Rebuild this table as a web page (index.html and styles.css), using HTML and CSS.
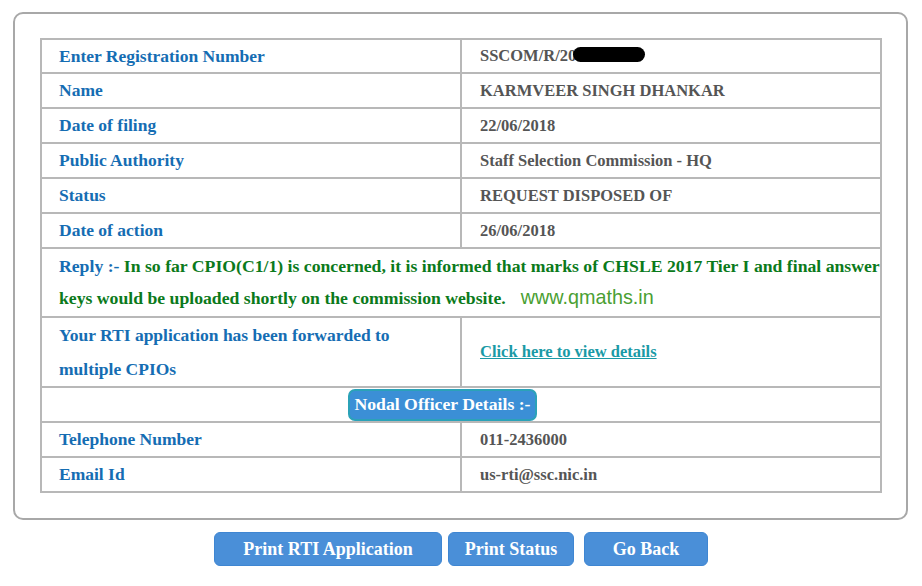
FILE: index.html
```html
<!DOCTYPE html>
<html>
<head>
<meta charset="utf-8">
<link rel="stylesheet" href="styles.css">
</head>
<body>
<div class="panel">
  <table class="status">
    <tr class="first"><td class="lbl">Enter Registration Number</td><td class="val">SSCOM/R/20<span class="redact"></span></td></tr>
    <tr><td class="lbl">Name</td><td class="val">KARMVEER SINGH DHANKAR</td></tr>
    <tr><td class="lbl">Date of filing</td><td class="val">22/06/2018</td></tr>
    <tr><td class="lbl">Public Authority</td><td class="val">Staff Selection Commission - HQ</td></tr>
    <tr><td class="lbl">Status</td><td class="val">REQUEST DISPOSED OF</td></tr>
    <tr><td class="lbl">Date of action</td><td class="val">26/06/2018</td></tr>
    <tr class="replyrow"><td class="reply" colspan="2"><span class="lbl-in">Reply :-</span> In so far CPIO(C1/1) is concerned, it is informed that marks of CHSLE 2017 Tier I and final answer keys would be uploaded shortly on the commission website.<span class="wm">www.qmaths.in</span></td></tr>
    <tr class="tall"><td class="lbl multi">Your RTI application has been forwarded to<br>multiple CPIOs</td><td class="val"><a class="link" href="#">Click here to view details</a></td></tr>
    <tr><td class="center" colspan="2"><span class="badge">Nodal Officer Details :-</span></td></tr>
    <tr><td class="lbl">Telephone Number</td><td class="val">011-2436000</td></tr>
    <tr><td class="lbl">Email Id</td><td class="val">us-rti@ssc.nic.in</td></tr>
  </table>
</div>
<div class="actions">
  <button class="btn b1">Print RTI Application</button>
  <button class="btn b2">Print Status</button>
  <button class="btn b3">Go Back</button>
</div>
</body>
</html>
```
FILE: styles.css
```css
html, body { margin: 0; padding: 0; background: #fff; }
body { font-family: "Liberation Serif", "Times New Roman", serif; font-weight: bold; }
.panel {
  margin: 12px 0 0 13px;
  width: 866px;
  border: 2px solid #a8a8a8;
  border-radius: 10px;
  padding: 24px 0 25px 25px;
}
.status {
  width: 842px;
  border-collapse: collapse;
  border: 2px solid #b0b0b0;
}
.status td {
  border: 2px solid #b8b8b8;
  height: 33px;
  padding: 0;
  vertical-align: middle;
}
.status .first td { height: 32px; }
.lbl {
  width: 401px;
  padding-left: 17px !important;
  color: #156db3;
  font-size: 17.5px;
}
.val {
  padding-left: 18px !important;
  color: #555;
  font-size: 16.5px;
}
.redact {
  display: inline-block;
  width: 72px;
  height: 15px;
  background: #000;
  border-radius: 8px;
  vertical-align: -1px;
  margin-left: -3px;
}
.replyrow td { height: 66px; }
.reply {
  padding: 0 0 1px 17px !important;
  color: #0b7a1b;
  font-size: 17.7px;
  line-height: 32px;
}
.lbl-in { color: #156db3; }
.wm {
  font-family: "Liberation Sans", Arial, sans-serif;
  font-weight: normal;
  color: #4aa032;
  font-size: 19.8px;
  line-height: 18px;
  margin-left: 15px;
}
.tall td { height: 67px; }
.multi { line-height: 34px; }
.link { color: #1a9aa6; text-decoration: underline; font-size: 16.5px; }
.center { text-align: center; padding-right: 37px !important; }
.badge {
  display: inline-block;
  background: #3b8fd6;
  color: #fff;
  border: 2px solid #2ba2b8;
  border-radius: 7px;
  padding: 3px 4px 4px;
  font-size: 17.7px;
  line-height: 21px;
}
.actions {
  display: flex;
  justify-content: center;
  gap: 6px;
  margin-top: 12px;
  padding-left: 0;
}
.btn {
  font-family: "Liberation Serif", "Times New Roman", serif;
  font-weight: bold;
  font-size: 18px;
  color: #fff;
  background: #4a8fd8;
  border: 1px solid #3f86d2;
  border-radius: 6px;
  height: 34px;
  padding: 0;
}
.b1 { width: 228px; }
.b2 { width: 126px; }
.b3 { width: 124px; margin-left: 4px; }
```
